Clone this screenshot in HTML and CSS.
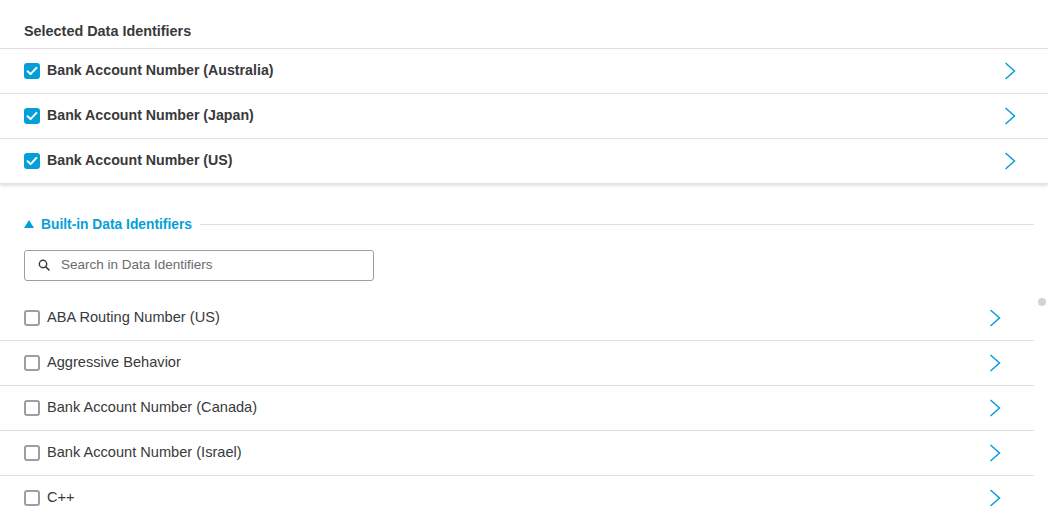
FILE: index.html
```html
<!DOCTYPE html>
<html>
<head>
<meta charset="utf-8">
<link rel="stylesheet" href="styles.css">
</head>
<body>
<div class="page">
  <section class="selected">
    <div class="sel-title">Selected Data Identifiers</div>
    <div class="row sel-row">
      <span class="cb checked"><svg viewBox="0 0 16 16" width="16" height="16"><path d="M3.6 8.2 L6.6 11.1 L12.4 4.9" fill="none" stroke="#fff" stroke-width="2" stroke-linecap="round" stroke-linejoin="round"/></svg></span>
      <span class="label bold">Bank Account Number (Australia)</span>
      <svg class="chev" viewBox="0 0 12 18" width="12" height="18"><path d="M1.5 1 L10.5 9 L1.5 17" fill="none" stroke="#049fd9" stroke-width="1.5"/></svg>
    </div>
    <div class="row sel-row">
      <span class="cb checked"><svg viewBox="0 0 16 16" width="16" height="16"><path d="M3.6 8.2 L6.6 11.1 L12.4 4.9" fill="none" stroke="#fff" stroke-width="2" stroke-linecap="round" stroke-linejoin="round"/></svg></span>
      <span class="label bold">Bank Account Number (Japan)</span>
      <svg class="chev" viewBox="0 0 12 18" width="12" height="18"><path d="M1.5 1 L10.5 9 L1.5 17" fill="none" stroke="#049fd9" stroke-width="1.5"/></svg>
    </div>
    <div class="row sel-row">
      <span class="cb checked"><svg viewBox="0 0 16 16" width="16" height="16"><path d="M3.6 8.2 L6.6 11.1 L12.4 4.9" fill="none" stroke="#fff" stroke-width="2" stroke-linecap="round" stroke-linejoin="round"/></svg></span>
      <span class="label bold">Bank Account Number (US)</span>
      <svg class="chev" viewBox="0 0 12 18" width="12" height="18"><path d="M1.5 1 L10.5 9 L1.5 17" fill="none" stroke="#049fd9" stroke-width="1.5"/></svg>
    </div>
  </section>

  <section class="builtin">
    <div class="bi-head">
      <svg class="tri" viewBox="0 0 10 8" width="10" height="8"><path d="M0 8 L5 0 L10 8 Z" fill="#049fd9"/></svg>
      <span class="bi-title">Built-in Data Identifiers</span>
      <span class="bi-line"></span>
    </div>
    <div class="search">
      <svg class="mag" viewBox="0 0 12 12" width="12" height="12"><circle cx="5" cy="5" r="3.7" fill="none" stroke="#39393b" stroke-width="1.4"/><path d="M7.7 7.7 L11 11" stroke="#39393b" stroke-width="1.6" stroke-linecap="round"/></svg>
      <span class="placeholder">Search in Data Identifiers</span>
    </div>
    <div class="list">
      <div class="row bi-row">
        <span class="cb"></span>
        <span class="label">ABA Routing Number (US)</span>
        <svg class="chev" viewBox="0 0 12 18" width="12" height="18"><path d="M1.5 1 L10.5 9 L1.5 17" fill="none" stroke="#049fd9" stroke-width="1.5"/></svg>
      </div>
      <div class="row bi-row">
        <span class="cb"></span>
        <span class="label">Aggressive Behavior</span>
        <svg class="chev" viewBox="0 0 12 18" width="12" height="18"><path d="M1.5 1 L10.5 9 L1.5 17" fill="none" stroke="#049fd9" stroke-width="1.5"/></svg>
      </div>
      <div class="row bi-row">
        <span class="cb"></span>
        <span class="label">Bank Account Number (Canada)</span>
        <svg class="chev" viewBox="0 0 12 18" width="12" height="18"><path d="M1.5 1 L10.5 9 L1.5 17" fill="none" stroke="#049fd9" stroke-width="1.5"/></svg>
      </div>
      <div class="row bi-row">
        <span class="cb"></span>
        <span class="label">Bank Account Number (Israel)</span>
        <svg class="chev" viewBox="0 0 12 18" width="12" height="18"><path d="M1.5 1 L10.5 9 L1.5 17" fill="none" stroke="#049fd9" stroke-width="1.5"/></svg>
      </div>
      <div class="row bi-row">
        <span class="cb"></span>
        <span class="label">C++</span>
        <svg class="chev" viewBox="0 0 12 18" width="12" height="18"><path d="M1.5 1 L10.5 9 L1.5 17" fill="none" stroke="#049fd9" stroke-width="1.5"/></svg>
      </div>
    </div>
  </section>
  <span class="scroll-dot"></span>
</div>
</body>
</html>
```
FILE: styles.css
```css
html, body {
  margin: 0;
  padding: 0;
  background: #fff;
}
body {
  font-family: "Liberation Sans", Arial, sans-serif;
  color: #39393b;
  width: 1048px;
  height: 518px;
  overflow: hidden;
}
.page {
  position: relative;
  height: 518px;
}
.selected {
  box-shadow: 0 2px 3px rgba(0, 0, 0, 0.12);
  border-bottom: 1px solid #e4e4e4;
}
.sel-title {
  height: 48px;
  box-sizing: border-box;
  padding: 23px 0 0 24px;
  font-size: 14.4px;
  font-weight: bold;
  line-height: 16px;
}
.row {
  display: flex;
  align-items: center;
  height: 45px;
  box-sizing: border-box;
  border-top: 1px solid #dfdfdf;
}
.sel-row {
  padding: 0 32px 2px 24px;
}
.sel-row .cb {
  margin-top: 2px;
}
.sel-row .chev {
  margin-top: 1px;
}
.cb {
  width: 16px;
  height: 16px;
  box-sizing: border-box;
  border: 2px solid #9e9ea2;
  border-radius: 3px;
  flex: none;
  display: flex;
}
.cb.checked {
  background: #049fd9;
  border: none;
}
.label {
  margin-left: 7px;
  font-size: 14.6px;
  flex: 1;
}
.label.bold {
  font-size: 14.2px;
  font-weight: bold;
}
.chev {
  flex: none;
}
.builtin {
  width: 1034px;
  padding-top: 32px;
}
.bi-head {
  display: flex;
  align-items: center;
  padding-left: 24px;
  height: 16px;
}
.tri {
  flex: none;
}
.bi-title {
  margin-left: 7px;
  color: #049fd9;
  font-size: 13.8px;
  font-weight: bold;
}
.bi-line {
  flex: 1;
  height: 1px;
  background: #dfdfdf;
  margin-left: 8px;
}
.bi-line {
  margin-top: 1px;
}
.search {
  margin: 18px 0 0 24px;
  width: 350px;
  height: 31px;
  box-sizing: border-box;
  border: 1px solid #9e9ea2;
  border-radius: 3px;
  display: flex;
  align-items: center;
  padding: 0 0 2px 13px;
}
.placeholder {
  margin-left: 11px;
  font-size: 13.5px;
  color: #6b6b6e;
}
.list {
  margin-top: 15px;
}
.bi-row {
  border-top: none;
  border-bottom: 1px solid #dfdfdf;
  padding: 0 33px 2px 24px;
}
.bi-row .cb {
  margin-top: 2px;
}
.bi-row .chev {
  margin-top: 2px;
}
.scroll-dot {
  position: absolute;
  left: 1038px;
  top: 298px;
  width: 8px;
  height: 8px;
  border-radius: 50%;
  background: #d3d3d3;
}
```
